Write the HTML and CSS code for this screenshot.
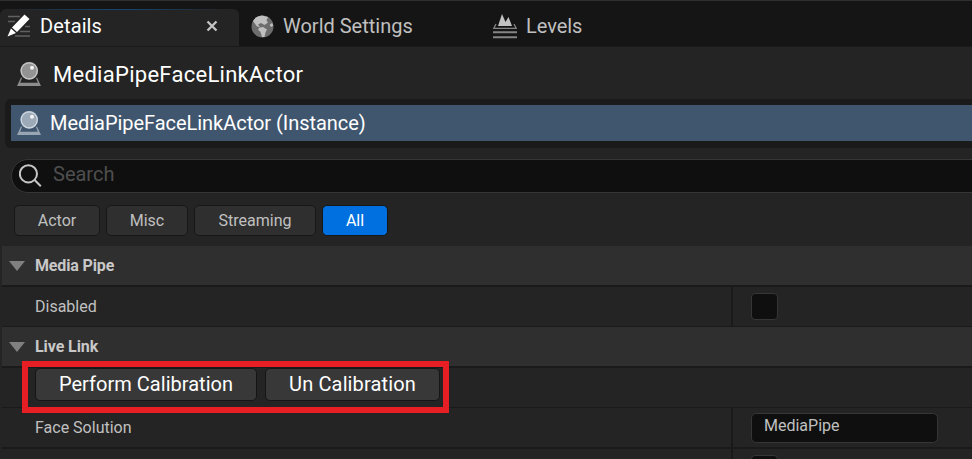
FILE: index.html
```html
<!DOCTYPE html>
<html lang="en">
<head>
<meta charset="utf-8">
<title>Details</title>
<link rel="stylesheet" href="styles.css">
</head>
<body>
<svg class="defs" aria-hidden="true">
  <symbol id="actor" viewBox="0 0 24 24">
    <path d="M4 15.500H20L24 24H0Z" fill="var(--stand)"/>
    <path d="M5 16H19L20.800 20.800H3.200Z" fill="var(--base)"/>
    <circle cx="12.200" cy="8.800" r="10" fill="var(--base)"/>
    <circle cx="12.200" cy="8.800" r="8.900" fill="var(--ball)"/>
    <circle cx="12.200" cy="8.800" r="8" fill="none" stroke="var(--rim)" stroke-width="1.200"/>
    <circle cx="15" cy="5.700" r="2" fill="#f3f3f3"/>
  </symbol>
</svg>
<div class="panel">
  <nav class="tabs">
    <div class="tab tab-active">
      <svg class="tab-icon" width="24" height="24" viewBox="0 0 24 24">
        <path d="M1 2.500h12M1 7.500h7M18 12.500h5M13 17.500h10M8 22h15" stroke="#606060" stroke-width="1.300"/>
        <path d="M17.500.5 22.500 5 10 18 5 13.500ZM4 14.500 9 19 .5 22.500Z" fill="#fff"/>
      </svg>
      <span class="t-details">Details</span>
      <svg class="close" width="12" height="12" viewBox="0 0 12 12"><path d="M1.500 1.500 10.500 10.500M10.500 1.500 1.500 10.500" stroke="#c4c4c4" stroke-width="2.300"/></svg>
    </div>
    <div class="tab tab-world">
      <svg width="23" height="23" viewBox="0 0 23 23">
        <circle cx="11.500" cy="11.500" r="11" fill="#6d6d6d"/>
        <path d="M2 6Q5 1 11 .6L17 2 15.500 5.500 17 7.500 13.500 10 10 8 7 9.500 9 12 6 11.500ZM8.500 12.500 12 12l4 2.500-1.500 3-1 4.500H11L9.500 17 7 14.500ZM18.500 10l2.500-2 1.300 2.500-2 1.500Z" fill="#c0c0c0"/>
      </svg>
      <span class="t-world">World Settings</span>
    </div>
    <div class="tab tab-levels">
      <svg width="24" height="25" viewBox="0 0 24 25">
        <path d="M5 12 9 0l3.500 8 3-5 3.500 9Z" fill="#c2c2c2"/>
        <path d="M3 10 .8 14.300h22.400L21 10" fill="none" stroke="#858585" stroke-width="1.300"/>
        <path d="M0 18.300h24M0 23.200h24" stroke="#858585" stroke-width="2"/>
      </svg>
      <span class="t-levels">Levels</span>
    </div>
  </nav>

  <header class="title">
    <svg class="actor" width="24" height="24"><use href="#actor"/></svg>
    <span class="t-title">MediaPipeFaceLinkActor</span>
  </header>

  <div class="tree">
    <div class="tree-row">
      <svg class="actor actor-selected" width="24" height="24"><use href="#actor"/></svg>
      <span class="t-instance">MediaPipeFaceLinkActor (Instance)</span>
    </div>
  </div>

  <div class="search">
    <svg width="24" height="24" viewBox="0 0 24 24" fill="none" stroke="#c6c6c6" stroke-width="2"><circle cx="9.400" cy="9.800" r="8.600"/><path d="m15.400 15.800 6.400 6.400"/></svg>
    <span class="t-search">Search</span>
  </div>

  <div class="filters">
    <button class="filter f-actor">Actor</button>
    <button class="filter f-misc">Misc</button>
    <button class="filter f-stream">Streaming</button>
    <button class="filter f-all">All</button>
  </div>

  <section class="props">
    <div class="category"><i class="arrow"></i><b class="t-media">Media Pipe</b></div>
    <div class="row row-disabled">
      <div class="name t-disabled">Disabled</div>
      <div class="value"><span class="check"></span></div>
    </div>
    <div class="category"><i class="arrow"></i><b class="t-live">Live Link</b></div>
    <div class="row row-actions">
      <div class="actions">
        <button class="action a-perform">Perform Calibration</button>
        <button class="action a-un">Un Calibration</button>
      </div>
      <div class="highlight"></div>
    </div>
    <div class="row row-face">
      <div class="name t-face">Face Solution</div>
      <div class="value"><span class="field">MediaPipe</span></div>
    </div>
    <div class="row row-next">
      <div class="name"></div>
      <div class="value"><span class="check"></span></div>
    </div>
  </section>
</div>
</body>
</html>
```
FILE: styles.css
```css
* { box-sizing: border-box; }
body {
  margin: 0;
  background: #242424;
  color: #c0c0c0;
  font-family: Roboto, "Liberation Sans", sans-serif;
  font-size: 16px;
}
button { font: inherit; margin: 0; padding: 0; }
svg { display: block; flex: none; }
span, b, button { white-space: nowrap; }
.defs { position: absolute; width: 0; height: 0; }
.panel { width: 972px; height: 459px; overflow: hidden; }

.tabs {
  display: flex;
  height: 47px;
  padding-top: 8px;
  background: #151515;
  border-top: 1px solid #303030;
  border-bottom: 1px solid #1a1a1a;
  font-size: 20px;
}
.tab { display: flex; align-items: center; height: 37px; padding-bottom: 3px; }
.tab-active {
  width: 239px;
  padding-left: 7px;
  background: linear-gradient(90deg, #242424 5%, #16446f 45%, #16446f 55%, #242424 95%) top / 100% 1px no-repeat #242424;
  border-radius: 6px 6px 0 0;
  color: #fff;
}
.t-details { width: 64px; margin-left: 9px; letter-spacing: .12px; }
.close { margin-left: 102px; }
.tab-world { width: 242px; padding-left: 12px; }
.t-world { margin-left: 9px; }
.tab-levels { padding-left: 12px; }
.t-levels { margin-left: 9px; letter-spacing: -.05px; }

.title {
  display: flex;
  align-items: center;
  height: 52px;
  padding: 2px 0 0 17px;
  color: #fff;
  font-size: 22px;
}
.actor { overflow: visible; --ball: #939393; --rim: #c8c8c8; --stand: #8c8c8c; --base: #242424; }
.actor-selected { --ball: #9caab8; --rim: #cfd8e0; --stand: #98a5b2; --base: #40566e; }
.t-title { margin-left: 12px; letter-spacing: .28px; }
.tree {
  height: 49px;
  margin-left: 5px;
  padding: 6px 0 6px 6px;
  background: #1a1a1a;
  border-radius: 6px 0 0 6px;
}
.tree-row {
  display: flex;
  align-items: center;
  height: 36px;
  padding-left: 6px;
  background: #40566e;
  color: #fff;
  font-size: 20px;
}
.t-instance { margin-left: 9px; letter-spacing: -.04px; }

.search {
  display: flex;
  align-items: center;
  height: 34px;
  margin: 11px -20px 0 11px;
  padding-left: 7px;
  background: #0f0f0f;
  border: 1px solid #363636;
  border-radius: 17px;
}
.t-search { margin: -5px 0 0 10px; color: #4e4e4e; font-size: 20px; }
.filters { display: flex; gap: 6px; height: 53px; padding: 12px 0 0 14px; }
.filter {
  height: 31px;
  border: 1px solid #171717;
  border-radius: 5px;
  background: #2f2f2f;
  color: #c0c0c0;
}
.f-actor { width: 86px; }
.f-misc { width: 82px; }
.f-stream { width: 122px; }
.f-all { width: 66px; background: #0070e0; color: #fff; }

.props { padding-left: 2px; }
.category {
  display: flex;
  align-items: center;
  height: 41px;
  background: #2f2f2f;
  border-bottom: 2px solid #1a1a1a;
  color: #c8c8c8;
}
.t-media { letter-spacing: -.15px; }
.t-live { letter-spacing: -.08px; }
.arrow {
  width: 16px;
  height: 10px;
  margin: 1px 10px 0 7px;
  background: #808080;
  clip-path: polygon(0 0, 100% 0, 50% 100%);
}
.row { display: flex; height: 40px; border-bottom: 1px solid #1a1a1a; }
.name { width: 731px; padding: 10px 0 0 33px; border-right: 2px solid #1a1a1a; }
.value { padding: 6px 0 0 18px; }
.check {
  display: block;
  width: 27px;
  height: 27px;
  background: #0f0f0f;
  border: 1px solid #363636;
  border-radius: 4px;
}
.row-actions { position: relative; }
.actions { display: flex; gap: 8px; padding-left: 33px; }
.action {
  height: 33px;
  border: 1px solid #151515;
  border-radius: 5px;
  background: #383838;
  color: #fff;
  font-size: 20px;
  padding-bottom: 2px;
}
.a-perform { width: 222px; letter-spacing: .03px; }
.a-un { width: 175px; letter-spacing: .13px; }
.highlight {
  position: absolute;
  left: 20px;
  top: -7px;
  width: 427px;
  height: 52px;
  border: 6px solid #e81e25;
}
.row-face { height: 41px; border-bottom-width: 2px; }
.row-face .value { padding-top: 5px; }
.field {
  display: block;
  width: 187px;
  height: 30px;
  padding: 2px 0 0 12px;
  background: #0f0f0f;
  border: 1px solid #363636;
  border-radius: 5px;
}
.row-next { border-bottom: 0; }
```
